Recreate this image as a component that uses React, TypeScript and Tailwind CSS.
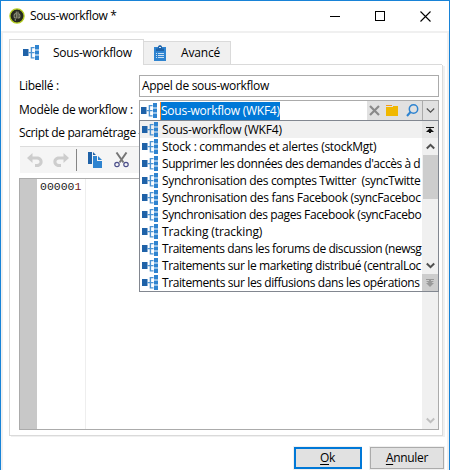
import type { ReactNode } from 'react';

function WorkflowIcon({ className = '' }: { className?: string }) {
  return (
    <svg width="17" height="16" viewBox="0 0 17 16" className={`shrink-0 ${className}`}>
      <rect x="0" y="4" width="5.5" height="7" fill="#1f62a8" />
      <path d="M5.500 7h6v1.200h-6zM7.700 2h1.400v11.500H7.700zM9 2h2.500v1.200H9zM9 12.300h2.500v1.200H9z" fill="#4c93d2" />
      <path d="M12 0h4v4.600h-4zM12 5.400h4v4.200h-4zM12 10.500h4v4.500h-4z" fill="#2f84d0" />
    </svg>
  );
}

function AppLogo() {
  return (
    <svg width="16" height="16" viewBox="0 0 16 16" className="shrink-0">
      <circle cx="8" cy="8" r="7.1" fill="#26291f" stroke="#b5cf20" strokeWidth="1.3" />
      <path d="M7.500 5.800H6.200c-1.500 0-1.500 4.200 0 4.200h1.100V3.500M6.300 12.800V11M9 3.500V10h.8c1.500 0 1.500-4.200 0-4.200" fill="none" stroke="#94967f" strokeWidth="1.100" />
    </svg>
  );
}

function Clipboard() {
  return (
    <svg width="12" height="16" viewBox="0 0 12 16" className="shrink-0">
      <path d="M0 2h12v14H0z" fill="#2f84d0" />
      <path d="M2 3.5h2V2c0-2.4 4-2.4 4 0v1.500h2V6H2z" fill="#1f62a8" />
      <path d="M5 2h2v1H5z" fill="#d9e8f5" />
      <path d="M2 8h1v1H2zM4 8h6v1H4zM2 10h1v1H2zM4 10h6v1H4zM2 12h1v1H2zM4 12h6v1H4z" fill="#c9e0f4" />
    </svg>
  );
}

function Undo({ flip = false }: { flip?: boolean }) {
  return (
    <svg width="16" height="16" viewBox="0 0 16 16" className={`shrink-0 ${flip ? '-scale-x-100' : ''}`}>
      <path d="M0 6l5.500-5v3.500H10c7.500 0 7.500 10.500 0 10.500H8v-3h2c3.400 0 3.400-4.500 0-4.500H5.500V11z" fill="#cdcdcd" />
    </svg>
  );
}

function Copy() {
  return (
    <svg width="15" height="16" viewBox="0 0 15 16" className="shrink-0">
      <path d="M0 0h4v12H0zM5 0l3 3H5z" fill="#1f62a8" />
      <path d="M5 4h4v5h5v7H5zM10 4l4 4h-4z" fill="#2f84d0" />
    </svg>
  );
}

function Cut() {
  return (
    <svg width="15" height="16" viewBox="0 0 15 16" className="shrink-0" fill="none">
      <path d="M2.500 .5l7 10M12.500 .5l-7 10" stroke="#777" strokeWidth="2" />
      <circle cx="3" cy="12.500" r="2.200" stroke="#4b4e8a" strokeWidth="1.200" />
      <circle cx="12" cy="12.500" r="2.200" stroke="#4b4e8a" strokeWidth="1.200" />
    </svg>
  );
}

function Chevron({ up = false, color = '#505050', bold = true }: { up?: boolean; color?: string; bold?: boolean }) {
  return (
    <svg width="9" height="7" viewBox="0 0 9 7" className={`shrink-0 ${up ? 'rotate-180' : ''}`} fill="none">
      <path d="M.8 1.500L4.500 5.200 8.200 1.500" stroke={color} strokeWidth={bold ? 2 : 1.200} />
    </svg>
  );
}

const rows = [
  { text: 'Sous-workflow (WKF4)', w: 'tracking-[-0.2px]' },
  { text: 'Stock : commandes et alertes (stockMgt)', w: 'tracking-[-0.27px]' },
  { text: "Supprimer les données des demandes d'accès à d", w: 'tracking-[-0.44px]' },
  { text: 'Synchronisation des comptes Twitter  (syncTwitte', w: 'tracking-[-0.35px]' },
  { text: 'Synchronisation des fans Facebook (syncFaceboc', w: 'tracking-[-0.32px]' },
  { text: 'Synchronisation des pages Facebook (syncFacebo', w: 'tracking-[-0.38px]' },
  { text: 'Tracking (tracking)', w: 'tracking-[-0.1px]' },
  { text: 'Traitements dans les forums de discussion (newsg', w: 'tracking-[-0.44px]' },
  { text: 'Traitements sur le marketing distribué (centralLoc', w: 'tracking-[-0.4px]' },
  { text: 'Traitements sur les diffusions dans les opérations', w: 'tracking-[-0.4px]' },
];

function Dropdown() {
  return (
    <div className="absolute -left-px top-[19px] z-10 flex h-[172px] w-[300px] border border-[#828790] bg-white">
      <div className="min-w-0 flex-1 overflow-hidden">
        {rows.map((r, i) => (
          <div key={r.text} className={`flex h-[17px] items-center pl-0.5 ${i === 0 ? 'bg-[#f0f0f0]' : ''}`}>
            <WorkflowIcon />
            <span className={`ml-[3px] whitespace-pre leading-[17px] ${r.w}`}>{r.text}</span>
          </div>
        ))}
      </div>
      <div className="flex w-4 shrink-0 flex-col bg-[#f0f0f0]">
        <div className="flex h-[17px] items-center justify-center bg-[#e5e5e5]">
          <svg width="8" height="6" viewBox="0 0 8 6"><path d="M0 0h8v1H0zM4 1l4 4H5v1H3V5H0z" fill="#111" /></svg>
        </div>
        <div className="flex h-[17px] items-center justify-center"><Chevron up /></div>
        <div className="ml-px h-11 bg-[#cdcdcd]" />
        <div className="flex-1" />
        <div className="flex h-[17px] items-center justify-center"><Chevron /></div>
        <div className="flex h-[17px] items-center justify-center bg-[#cdcdcd]">
          <svg width="8" height="8" viewBox="0 0 8 8"><path d="M0 0h8v1H0zM3 1h2v1h3L4 5 0 2h3zM0 4h8L4 8z" fill="#999" /></svg>
        </div>
      </div>
    </div>
  );
}

function Label({ children }: { children: ReactNode }) {
  return <div className="w-[120px] shrink-0 whitespace-nowrap tracking-[-0.3px]">{children}</div>;
}

export default function App() {
  return (
    <div className="flex h-[470px] w-[450px] flex-col overflow-hidden border-x border-t border-[#1883d7] bg-white font-['Open_Sans','Noto_Sans',sans-serif] text-[12px] leading-4 text-black">
      <header className="flex h-[30px] shrink-0 items-center pl-2">
        <AppLogo />
        <span className="ml-[5px] tracking-[-0.35px]">Sous-workflow *</span>
        <div className="ml-auto mr-[18px] flex items-center gap-[35px]">
          <div className="h-px w-2.5 bg-black" />
          <div className="size-2.5 border border-black" />
          <svg width="11" height="11" viewBox="0 0 11 11"><path d="M.5.5l10 10M10.500.5l-10 10" stroke="#000" strokeWidth="1.100" /></svg>
        </div>
      </header>
      <div className="flex min-h-0 flex-1 flex-col border-x-2 border-t-2 border-[#f0f0f0]">
        <div className="ml-1.5 mr-[5px] mt-1.5 flex h-[26px] items-end">
          <div className="flex h-[26px] w-[135px] items-center border-x border-t border-[#dadada] pl-[13px]">
            <WorkflowIcon />
            <span className="ml-[13px] tracking-[-0.25px]">Sous-workflow</span>
          </div>
          <div className="flex h-6 w-[87px] items-center border-b border-r border-t border-[#dadada] bg-[#f0f0f0] pl-2.5">
            <Clipboard />
            <span className="ml-[15px] tracking-[-0.15px]">Avancé</span>
          </div>
          <div className="h-px flex-1 bg-[#dadada]" />
        </div>
        <main className="ml-1.5 mr-[4px] flex h-[371px] w-[434px] flex-col border-x border-b border-[#dadada] pl-[9px] pr-[3px] pt-2.5 shadow-[2px_1px_0_#f0f0f0]">
          <div className="flex h-[22px] w-[420px] items-center">
            <Label>Libellé :</Label>
            <div className="flex h-[22px] w-[300px] items-center border border-[#ababab] pl-0.5 tracking-[-0.3px]">Appel de sous-workflow</div>
          </div>
          <div className="mt-[3px] flex h-5 w-[420px] items-center">
            <Label>Modèle de workflow :</Label>
            <div className="relative flex h-5 w-[300px] items-center border-l border-t border-[#ababab] pl-px">
              <WorkflowIcon />
              <div className="ml-0.5 flex h-[18px] w-[120px] items-center border-l border-[#ff8728] bg-[#0078d7] text-white"><span className="whitespace-nowrap tracking-[-0.25px]">Sous-workflow (WKF4)</span></div>
              <div className="ml-auto flex h-full w-[55px] shrink-0 items-center bg-[#e1e1e1] pl-0.5">
                <svg width="11" height="11" viewBox="0 0 11 11"><path d="M1 1l9 9M10 1l-9 9" stroke="#8a8a8a" strokeWidth="2.200" /></svg>
                <svg width="12" height="12" viewBox="0 0 12 12" className="ml-1.5"><path d="M0 0h6v1H0z" fill="#f39a1c" /><path d="M0 2h7V1h5v10H0z" fill="#f0b800" /></svg>
                <svg width="13" height="13" viewBox="0 0 13 13" className="ml-2" fill="none"><circle cx="7.500" cy="5" r="4.200" stroke="#2f84d0" strokeWidth="1.500" /><path d="M4.500 8L1 12" stroke="#2f84d0" strokeWidth="2" /></svg>
              </div>
              <div className="flex h-full w-[17px] items-center justify-center border-x border-[#ababab] bg-[#e1e1e1]"><Chevron bold={false} /></div>
              <Dropdown />
            </div>
          </div>
          <div className="mt-[5px] flex h-4 items-center">
            <span className="tracking-[-0.38px]">Script de paramétrage</span>
            <div className="ml-0.5 mr-1 h-px flex-1 bg-[#bbb]" />
          </div>
          <div className="ml-px mt-[5px] flex h-[27px] w-[418px] items-center border-t border-[#dcdcdc] bg-[#f5f5f5] pl-[7px]">
            <Undo />
            <div className="w-2.5" />
            <Undo flip />
            <div className="ml-[7px] mr-[11px] h-[22px] w-px bg-[#858585]" />
            <Copy />
            <div className="w-[11px]" />
            <Cut />
          </div>
          <div className="mt-[5px] flex h-[252px] w-[420px] border border-[#ababab]">
            <div className="w-[17px] bg-[#c8c8c8]" />
            <div className="w-[49px] border-r border-[#eee] pl-[3px] font-['Liberation_Mono',monospace] text-[11.500px] leading-4 text-[#222]">00000<span className="text-[#722]">1</span></div>
            <div className="flex-1" />
            <div className="flex w-4 items-end justify-center bg-[#f0f0f0] pb-[5px]"><Chevron color="#bfbfbf" /></div>
          </div>
        </main>
        <footer className="mr-0.5 mt-2.5 flex justify-end gap-[7px]">
          <button className="flex h-[24px] w-[69px] items-center justify-center border border-[#f0f0f0] bg-[#e1e1e1] p-0">
            <span className="flex h-[22px] w-[68px] shrink-0 items-center justify-center border-2 border-[#0078d7] tracking-[-0.4px]"><span><u className="underline-offset-2">O</u>k</span></span>
          </button>
          <button className="flex h-[24px] w-[76px] items-center justify-center border border-[#f0f0f0] bg-[#e1e1e1] p-0">
            <span className="flex h-[22px] w-[74px] shrink-0 items-center justify-center border border-[#ababab] tracking-[-0.3px]"><span><u className="underline-offset-2">A</u>nnuler</span></span>
          </button>
        </footer>
      </div>
    </div>
  );
}
